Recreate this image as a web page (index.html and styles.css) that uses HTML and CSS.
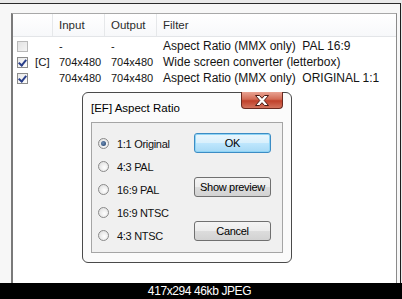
FILE: index.html
```html
<!DOCTYPE html>
<html>
<head>
<meta charset="utf-8">
<link rel="stylesheet" href="styles.css">
</head>
<body>
<div class="window">
  <div class="list">
    <div class="header">
      <span class="hcell first"></span>
      <span class="hcell">Input</span>
      <span class="hcell">Output</span>
      <span class="hcell last">Filter</span>
    </div>
    <div class="row">
      <span class="cell first"><span class="check disabled"></span></span>
      <span class="cell">-</span>
      <span class="cell">-</span>
      <span class="cell name">Aspect Ratio (MMX only)&nbsp; PAL 16:9</span>
    </div>
    <div class="row">
      <span class="cell first"><span class="check on"></span><span class="tag">[C]</span></span>
      <span class="cell">704x480</span>
      <span class="cell">704x480</span>
      <span class="cell name">Wide screen converter (letterbox)</span>
    </div>
    <div class="row">
      <span class="cell first"><span class="check on"></span></span>
      <span class="cell">704x480</span>
      <span class="cell">704x480</span>
      <span class="cell name">Aspect Ratio (MMX only)&nbsp; ORIGINAL 1:1</span>
    </div>
  </div>

  <div class="dialog">
    <div class="titlebar">[EF] Aspect Ratio</div>
    <div class="close">
      <svg width="18" height="13" viewBox="0 0 18 13">
        <path d="M2.5 1.5 H6.5 L9 4.3 L11.5 1.5 H15.5 L11.2 6.5 L15.5 11.5 H11.5 L9 8.7 L6.5 11.5 H2.5 L6.8 6.5 Z" fill="#fff" stroke="#4a1a12" stroke-width="1" stroke-linejoin="round"/>
      </svg>
    </div>
    <div class="panel">
      <div class="radios">
        <div class="ropt"><span class="radio sel"></span>1:1 Original</div>
        <div class="ropt"><span class="radio"></span>4:3 PAL</div>
        <div class="ropt"><span class="radio"></span>16:9 PAL</div>
        <div class="ropt"><span class="radio"></span>16:9 NTSC</div>
        <div class="ropt"><span class="radio"></span>4:3 NTSC</div>
      </div>
      <div class="buttons">
        <div class="btn default">OK</div>
        <div class="btn">Show preview</div>
        <div class="btn">Cancel</div>
      </div>
    </div>
  </div>
</div>
<div class="caption">417x294 46kb JPEG</div>
</body>
</html>
```

FILE: styles.css
```css
* { box-sizing: border-box; }
html, body { margin: 0; padding: 0; }
body {
  width: 402px;
  height: 299px;
  background: #e9e9e9;
  font-family: "Liberation Sans", Arial, sans-serif;
  overflow: hidden;
}
.window {
  position: relative;
  margin-top: 3px;
  width: 401px;
  height: 280px;
  border-top: 1px solid #2a2a2a;
  border-right: 1px solid #1e1e1e;
  background: #f7f7f7;
  padding: 9px 3px 0 11px;
}
.list {
  height: 100%;
  background: #fff;
  border-left: 2px solid #7a7a7a;
  border-top: 1px solid #a8a8a8;
  border-right: 1px solid #8a8a8a;
  font-size: 11px;
  color: #141414;
}
.header, .row {
  display: grid;
  grid-template-columns: 40px 52px 52px 1fr;
}
.header {
  height: 23px;
  background: linear-gradient(#ffffff, #f7f8fa);
  border-bottom: 1px solid #e3e5e8;
  align-items: center;
  color: #2b2b2b;
  font-size: 11.5px;
  margin-bottom: 1px;
}
.hcell {
  height: 100%;
  display: flex;
  align-items: center;
  padding-left: 6px;
  border-right: 1px solid #e6e8ea;
}
.hcell.last { border-right: none; }
.row { height: 16px; align-items: center; }
.cell {
  padding-left: 6px;
  white-space: nowrap;
  display: flex;
  align-items: center;
}
.cell.name { font-size: 12px; }
.cell.first { padding-left: 4px; font-size: 11.5px; }
.tag { margin-left: 7px; }
.check {
  width: 11px;
  height: 11px;
  border: 1px solid #8b8b8b;
  background: linear-gradient(135deg, #e8e8e8, #fdfdfd);
  position: relative;
  flex: none;
}
.check.disabled {
  border-color: #b8b8b8;
  background: linear-gradient(135deg, #e2e2e2, #f4f4f4);
}
.check.on::after {
  content: "";
  position: absolute;
  left: 2px;
  top: 0px;
  width: 3px;
  height: 6px;
  border-right: 2px solid #2a3f8a;
  border-bottom: 2px solid #2a3f8a;
  transform: rotate(40deg);
}
.dialog {
  position: absolute;
  left: 82px;
  top: 88px;
  width: 210px;
  height: 171px;
  border: 1px solid #4a4a4a;
  border-radius: 6px;
  background: #fbfbfb;
  padding: 0 7px 0 8px;
  font-size: 11px;
  color: #111;
}
.titlebar {
  height: 29px;
  display: flex;
  align-items: center;
  font-size: 11.5px;
  color: #000;
}
.close {
  position: absolute;
  top: -1px;
  right: 8px;
  width: 42px;
  height: 17px;
  border: 1px solid #6b2a20;
  border-top: none;
  border-radius: 0 0 4px 4px;
  background: linear-gradient(#e9a393, #d26b55 45%, #c0402a 55%, #d3735d);
  display: flex;
  align-items: center;
  justify-content: center;
}
.panel {
  width: 192px;
  height: 131px;
  border: 1px solid #a5a5a5;
  background: #f0f0f0;
  display: flex;
}
.radios {
  width: 102px;
  padding: 9px 0 0 6px;
  letter-spacing: -0.3px;
}
.ropt {
  height: 23px;
  display: flex;
  align-items: center;
  white-space: nowrap;
}
.radio {
  width: 11px;
  height: 11px;
  border-radius: 50%;
  border: 1px solid #8a8a8a;
  background: radial-gradient(circle at 60% 60%, #ffffff, #d9d9d9);
  margin-right: 8px;
  position: relative;
  flex: none;
}
.radio.sel::after {
  content: "";
  position: absolute;
  left: 2px;
  top: 2px;
  width: 5px;
  height: 5px;
  border-radius: 50%;
  background: radial-gradient(circle at 40% 40%, #6f8fb8, #1c3a63);
}
.buttons {
  padding-top: 10px;
  display: flex;
  flex-direction: column;
  gap: 24px;
}
.btn {
  width: 77px;
  height: 20px;
  border: 1px solid #707070;
  border-radius: 3px;
  background: linear-gradient(#f4f4f4, #ececec 48%, #dcdcdc 52%, #d2d2d2);
  display: flex;
  align-items: center;
  justify-content: center;
  letter-spacing: -0.3px;
  color: #000;
}
.btn.default {
  border-color: #3c8cc4;
  background: linear-gradient(#eaf6fd, #d9f0fc 48%, #bee6fd 52%, #a7d9f5);
  box-shadow: inset 0 0 0 1px #8fd4f5;
}
.caption {
  height: 16px;
  background: #000;
  color: #fff;
  font-size: 12px;
  letter-spacing: -0.4px;
  display: flex;
  align-items: center;
  justify-content: center;
  padding-right: 3px;
}
```
